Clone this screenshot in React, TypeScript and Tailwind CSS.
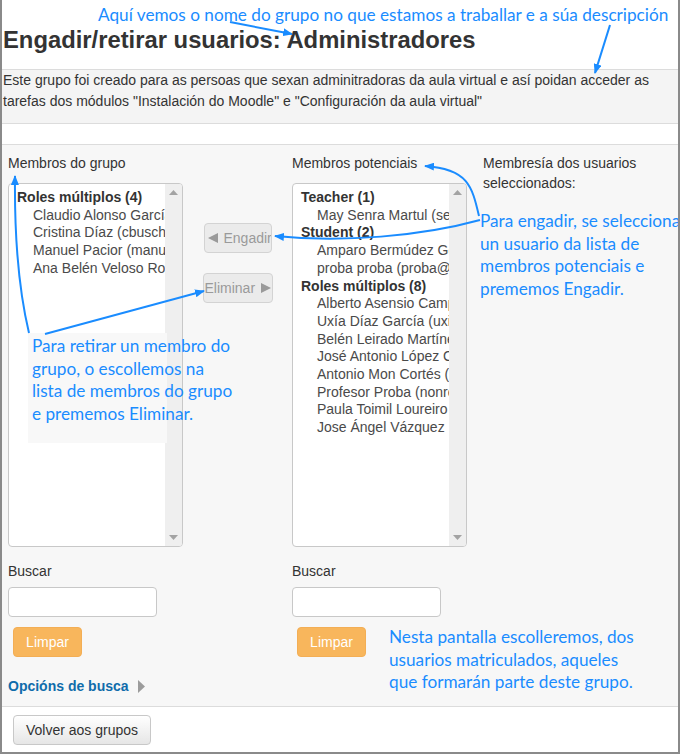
import React from "react";

const groupMembers = {
  header: "Roles múltiplos (4)",
  items: [
    "Claudio Alonso García (claudio@)",
    "Cristina Díaz (cbusch@)",
    "Manuel Pacior (manuel@)",
    "Ana Belén Veloso Rodríguez",
  ],
};

const potential = [
  { header: "Teacher (1)", items: ["May Senra Martul (senra@)"] },
  { header: "Student (2)", items: ["Amparo Bermúdez Gómez", "proba proba (proba@)"] },
  {
    header: "Roles múltiplos (8)",
    items: [
      "Alberto Asensio Campos",
      "Uxía Díaz García (uxia@)",
      "Belén Leirado Martínez",
      "José Antonio López Cid",
      "Antonio Mon Cortés (amon@)",
      "Profesor Proba (nonreply@)",
      "Paula Toimil Loureiro (pt@)",
      "Jose Ángel Vázquez Fernández",
    ],
  },
];

function ListBox({ groups }: { groups: { header: string; items: string[] }[] }) {
  return (
    <div className="mt-[10px] flex h-[364px] w-[175px] overflow-hidden rounded-[4px] border border-[#c8c8c8] bg-white">
      <div className="min-w-0 flex-1 overflow-hidden pt-[5px] text-[14px] leading-[17.7px]">
        {groups.map((g) => (
          <div key={g.header}>
            <div className="whitespace-nowrap pl-[8px] font-bold text-[#333]">{g.header}</div>
            {g.items.map((it) => (
              <div key={it} className="whitespace-nowrap pl-[24px] text-[#4a4a4a]">
                {it}
              </div>
            ))}
          </div>
        ))}
      </div>
      <div className="flex w-[17px] flex-col items-center justify-between bg-[#efefef] py-[6px]">
        <svg width="9" height="5" viewBox="0 0 9 5">
          <path d="M0 5 L4.5 0 L9 5 Z" fill="#a3a3a3" />
        </svg>
        <svg width="9" height="5" viewBox="0 0 9 5">
          <path d="M0 0 L4.5 5 L9 0 Z" fill="#a3a3a3" />
        </svg>
      </div>
    </div>
  );
}

function SearchBlock() {
  return (
    <>
      <div className="mt-[14px] text-[14px] leading-[20px] text-[#333]">Buscar</div>
      <div className="mt-[6px] h-[30px] w-[149px] rounded-[4px] border border-[#c8c8c8] bg-white" />
      <div className="ml-[5px] mt-[10px] flex h-[30px] w-[69px] items-center justify-center rounded-[4px] border border-[#f3ae55] bg-[#f8b65c] text-[14px] text-white">
        Limpar
      </div>
    </>
  );
}

export default function App() {
  const blue = "#1a8cff";
  return (
    <div
      className="relative h-[754px] w-[680px] overflow-hidden border-x-2 border-b-2 border-[#8a8a8a] bg-white"
      style={{ fontFamily: '"Liberation Sans", Arial, sans-serif' }}
    >
      {/* header */}
      <div className="h-[69px] pl-[1px] pt-[26px]">
        <h2 className="text-[23.8px] font-bold leading-[28px] text-[#333]">
          Engadir/retirar usuarios: Administradores
        </h2>
      </div>
      <div className="border-y border-[#dcdcdc] bg-[#f4f4f4] pb-[11px] pl-[1px] text-[14px] leading-[21px] text-[#333]">
        Este grupo foi creado para as persoas que sexan adminitradoras da aula virtual e así poidan acceder as tarefas dos módulos "Instalación do Moodle" e "Configuración da aula virtual"
      </div>
      <div className="h-[20px]" />

      {/* main gray area */}
      <div className="border-y border-[#dcdcdc] bg-[#f7f7f7] pb-[10px] pl-[6px] pt-[8px]">
        <div className="flex">
          <div className="flex w-[175px] flex-col">
            <div className="text-[14px] leading-[20px] text-[#333]">Membros do grupo</div>
            <ListBox groups={[groupMembers]} />
            <SearchBlock />
          </div>
          <div className="flex w-[109px] flex-col items-center gap-[20px] pt-[70px]">
            <div className="flex h-[30px] w-[68px] items-center overflow-hidden whitespace-nowrap rounded-[4px] border border-[#d3d3d3] bg-[#ebebeb] pl-[3px] text-[14px] text-[#9a9a9a]">
              <svg className="mr-[6px] shrink-0" width="10" height="10" viewBox="0 0 10 10">
                <path d="M10 0 L0 5 L10 10 Z" fill="#9a9a9a" />
              </svg>
              Engadir
            </div>
            <div className="flex h-[30px] w-[70px] items-center overflow-hidden whitespace-nowrap rounded-[4px] border border-[#d3d3d3] bg-[#ebebeb] pl-[1px] text-[14px] text-[#9a9a9a]">
              Eliminar
              <svg className="ml-[6px] shrink-0" width="10" height="10" viewBox="0 0 10 10">
                <path d="M0 0 L10 5 L0 10 Z" fill="#9a9a9a" />
              </svg>
            </div>
          </div>
          <div className="flex w-[175px] flex-col">
            <div className="text-[14px] leading-[20px] text-[#333]">Membros potenciais</div>
            <ListBox groups={potential} />
            <SearchBlock />
          </div>
          <div className="ml-[16px] w-[180px] text-[14px] leading-[20px] text-[#333]">
            Membresía dos usuarios seleccionados:
          </div>
        </div>
        <div className="mt-[19px] flex items-center text-[14px] font-bold leading-[20px] text-[#0f6cab]">
          Opcións de busca
          <svg className="ml-[9px]" width="7" height="13" viewBox="0 0 7 13">
            <path d="M0 0 L7 6.5 L0 13 Z" fill="#9c9c9c" />
          </svg>
        </div>
      </div>

      {/* footer */}
      <div className="pl-[11px] pt-[8px]">
        <div className="flex h-[30px] w-[138px] items-center justify-center rounded-[4px] border border-[#c8c8c8] bg-gradient-to-b from-white to-[#e6e6e6] text-[14px] text-[#333]">
          Volver aos grupos
        </div>
      </div>

      {/* annotation overlays */}
      <div className="absolute left-[26px] top-[333px] h-[110px] w-[139px] bg-[#f8f8f8]" />
      <div
        className="absolute inset-0"
        style={{ fontFamily: 'Lato, "Open Sans", sans-serif', color: blue }}
      >
        <div className="absolute left-[96px] top-[4px] whitespace-nowrap text-[17.2px] leading-[22.5px]">
          Aquí vemos o nome do grupo no que estamos a traballar e a súa descripción
        </div>
        <div className="absolute left-[478px] top-[210px] whitespace-nowrap text-[17.2px] leading-[22.5px]">
          Para engadir, se selecciona
          <br />
          un usuario da lista de
          <br />
          membros potenciais e
          <br />
          prememos Engadir.
        </div>
        <div className="absolute left-[30px] top-[335px] whitespace-nowrap text-[17.2px] leading-[22.5px]">
          Para retirar un membro do
          <br />
          grupo, o escollemos na
          <br />
          lista de membros do grupo
          <br />
          e prememos Eliminar.
        </div>
        <div className="absolute left-[387px] top-[626px] whitespace-nowrap text-[17.2px] leading-[22.5px]">
          Nesta pantalla escolleremos, dos
          <br />
          usuarios matriculados, aqueles
          <br />
          que formarán parte deste grupo.
        </div>
      </div>
      <svg className="pointer-events-none absolute left-0 top-0" width="680" height="754" viewBox="0 0 680 754">
        <defs>
          <marker id="ah" markerWidth="10" markerHeight="8" refX="9" refY="4" orient="auto" markerUnits="userSpaceOnUse">
            <path d="M0 0 L10 4 L0 8 Z" fill={blue} />
          </marker>
        </defs>
        <g stroke={blue} strokeWidth="2" fill="none" markerEnd="url(#ah)">
          <path d="M228 22 L290 34" />
          <path d="M608 25 L593 73" />
          <path d="M27 333 Q12 270 13 176" />
          <path d="M43 334 L202 291" />
          <path d="M478 220 C420 236 340 243 273 236" />
          <path d="M477 216 C470 186 466 169 423 166" />
        </g>
      </svg>
    </div>
  );
}
